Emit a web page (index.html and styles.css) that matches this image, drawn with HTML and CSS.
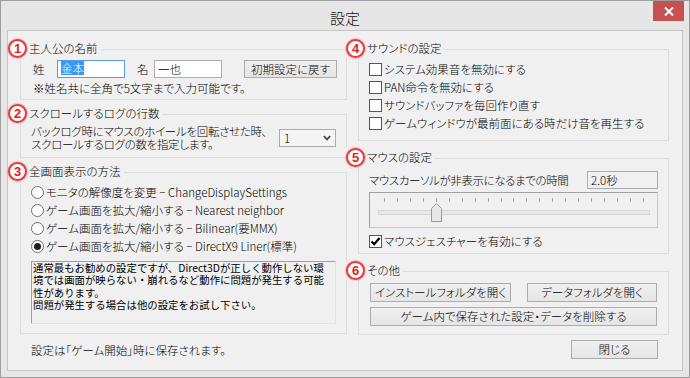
FILE: index.html
```html
<!DOCTYPE html>
<html lang="ja">
  <head>
    <meta charset="UTF-8" />
    <title>設定</title>
    <link rel="stylesheet" href="styles.css">
  </head>
  <body>
    <div class="window">
      <div class="titlebar">
        <span class="title">設定</span>
        <button class="close" aria-label="閉じる">
          <svg width="10" height="9" viewBox="0 0 10 9">
            <path d="M1 0.5L9 8.5M9 0.5L1 8.5" stroke="#fff" stroke-width="2" fill="none" />
          </svg>
        </button>
      </div>

      <div class="client">
        <div class="columns">
          <div class="col col-left">
            <section class="group g-name">
              <h3 class="group-title"><span class="num">1</span>主人公の名前</h3>
              <div class="name-row">
                <span class="name-label">姓</span>
                <div class="field focused"><span class="selected">金本</span></div>
                <span class="name-label mei">名</span>
                <div class="field">一也</div>
                <button class="btn btn-reset">初期設定に戻す</button>
              </div>
              <p class="note">※姓名共に全角で5文字まで入力可能です。</p>
            </section>

            <section class="group g-scroll">
              <h3 class="group-title"><span class="num">2</span>スクロールするログの行数</h3>
              <div class="scroll-row">
                <p class="scroll-text">バックログ時にマウスのホイールを回転させた時、<br>スクロールするログの数を指定します。</p>
                <div class="select">
                  <span>1</span>
                  <svg width="8" height="6" viewBox="0 0 8 6">
                    <path d="M0.8 1L4 4.4L7.2 1" stroke="#444" stroke-width="1.8" fill="none" />
                  </svg>
                </div>
              </div>
            </section>

            <section class="group g-screen">
              <h3 class="group-title"><span class="num">3</span>全画面表示の方法</h3>
              <div class="radio-row"><span class="radio"></span>モニタの解像度を変更 − ChangeDisplaySettings</div>
              <div class="radio-row"><span class="radio"></span>ゲーム画面を拡大/縮小する − Nearest neighbor</div>
              <div class="radio-row"><span class="radio"></span>ゲーム画面を拡大/縮小する − Bilinear(要MMX)</div>
              <div class="radio-row"><span class="radio on"></span>ゲーム画面を拡大/縮小する − DirectX9 Liner(標準)</div>
              <div class="memo">
                通常最もお勧めの設定ですが、Direct3Dが正しく動作しない環<br>
                境では画面が映らない・崩れるなど動作に問題が発生する可能<br>
                性があります。<br>
                問題が発生する場合は他の設定をお試し下さい。
              </div>
            </section>
          </div>

          <div class="col col-right">
            <section class="group g-sound">
              <h3 class="group-title"><span class="num">4</span>サウンドの設定</h3>
              <div class="check-row"><span class="check"></span>システム効果音を無効にする</div>
              <div class="check-row"><span class="check"></span>PAN命令を無効にする</div>
              <div class="check-row"><span class="check"></span>サウンドバッファを毎回作り直す</div>
              <div class="check-row"><span class="check"></span>ゲームウィンドウが最前面にある時だけ音を再生する</div>
            </section>

            <section class="group g-mouse">
              <h3 class="group-title"><span class="num">5</span>マウスの設定</h3>
              <div class="time-row">
                <span>マウスカーソルが非表示になるまでの時間</span>
                <div class="time-box">2.0秒</div>
              </div>
              <div class="slider">
                <svg width="287" height="34" viewBox="0 0 287 34">
                  <path d="M14.5 5v4M27.5 5v4M40.5 5v4M53.5 5v4M66.5 5v4M79.5 5v4M92.5 5v4M105.5 5v4M118.5 5v4M131.5 5v4M143.5 5v4M156.5 5v4M169.5 5v4M182.5 5v4M195.5 5v4M208.5 5v4M221.5 5v4M234.5 5v4M247.5 5v4M260.5 5v4M273.5 5v4" stroke="#a8a8a8" stroke-width="1" />
                  <rect x="8.5" y="17.5" width="271" height="4" fill="#e7eaea" stroke="#d6d6d6" />
                  <path d="M61.5 15.5L66.5 10.5L71.5 15.5V28.5H61.5Z" fill="#e8e8e8" stroke="#9a9a9a" />
                </svg>
              </div>
              <div class="check-row">
                <span class="check">
                  <svg width="11" height="11" viewBox="0 0 11 11">
                    <path d="M1.5 5.5L4.2 8.2L9.5 2" stroke="#000" stroke-width="2.2" fill="none" />
                  </svg>
                </span>マウスジェスチャーを有効にする
              </div>
            </section>

            <section class="group g-other">
              <h3 class="group-title"><span class="num">6</span>その他</h3>
              <div class="btn-row">
                <button class="btn btn-install">インストールフォルダを開く</button>
                <button class="btn btn-data">データフォルダを開く</button>
              </div>
              <button class="btn btn-delete">ゲーム内で保存された設定・データを削除する</button>
            </section>
          </div>
        </div>

        <div class="footer">
          <p>設定は「ゲーム開始」時に保存されます。</p>
          <button class="btn btn-close">閉じる</button>
        </div>
      </div>
    </div>
  </body>
</html>
```

FILE: styles.css
```css
* {
  margin: 0;
  padding: 0;
  box-sizing: border-box;
}

body {
  width: 690px;
  height: 378px;
  overflow: hidden;
  font-family: "Noto Sans CJK JP", "Noto Sans", sans-serif;
  font-size: 11.5px;
  font-weight: 300;
  font-feature-settings: "palt";
  color: #000;
}

.window {
  width: 690px;
  height: 378px;
  border: 1px solid #9e9e9e;
  background: #e6e6e6;
  display: flex;
  flex-direction: column;
}

.titlebar {
  height: 29px;
  flex: none;
  display: grid;
  grid-template-columns: 1fr auto 1fr;
  align-items: start;
}

.title {
  grid-column: 2;
  font-size: 15px;
  line-height: 27px;
  margin-top: 3px;
  color: #111;
}

.close {
  grid-column: 3;
  justify-self: end;
  width: 31px;
  height: 20px;
  margin-right: 5px;
  border: none;
  background: #c75050;
  display: flex;
  align-items: center;
  justify-content: center;
}

.client {
  flex: 1;
  margin: 0 6px 6px;
  border: 1px solid #c6c6c6;
  background: #f0f0f0;
  padding: 18px 0 0 12px;
}

.columns {
  display: flex;
  gap: 11px;
}

.col {
  display: flex;
  flex-direction: column;
}

.col-left {
  width: 327px;
  gap: 14px;
}

.col-right {
  width: 311px;
  gap: 17px;
}

/* group box */

.group {
  position: relative;
  border: 1px solid #dcdcdc;
}

.group-title {
  position: absolute;
  left: -13px;
  top: -11px;
  display: flex;
  align-items: center;
  gap: 2px;
  padding-right: 3px;
  background: #f0f0f0;
  font-size: 11.5px;
  font-weight: 300;
  line-height: 19px;
}

.num {
  width: 19px;
  height: 19px;
  border-radius: 50%;
  border: 2px solid #e8393b;
  background: #fff;
  box-shadow: 0 0 1px 1px rgba(240, 130, 130, 0.45);
  color: #e21c1c;
  font: bold 13px/15px "Liberation Sans", sans-serif;
  text-align: center;
}

.btn {
  font: inherit;
  font-feature-settings: "palt";
  height: 19px;
  line-height: 17px;
  padding: 0;
  border: 1px solid #acacac;
  background: linear-gradient(#f0f0f0, #e5e5e5);
  color: #000;
  text-align: center;
}

/* 1 */

.g-name {
  height: 51px;
  padding: 10px 0 0 12px;
}

.name-row {
  display: flex;
  align-items: center;
  height: 18px;
}

.name-label {
  width: 24px;
}

.name-label.mei {
  width: 17px;
  margin-left: 12px;
}

.field {
  width: 68px;
  height: 18px;
  border: 1px solid #abadb3;
  background: #fff;
  padding: 0 3px;
  line-height: 16px;
}

.field.focused {
  border-color: #569de5;
}

.selected {
  display: inline-block;
  background: #3399ff;
  color: #fff;
  line-height: 14px;
  vertical-align: 1px;
}

.btn-reset {
  width: 93px;
  height: 18px;
  line-height: 16px;
  margin-left: 22px;
}

.note {
  margin-top: 3px;
  line-height: 14px;
}

/* 2 */

.g-scroll {
  height: 44px;
}

.scroll-row {
  display: flex;
  align-items: center;
  justify-content: space-between;
  padding: 10px 10px 0;
}

.scroll-text {
  line-height: 13px;
  letter-spacing: -0.3px;
}

.select {
  width: 57px;
  height: 18px;
  border: 1px solid #acacac;
  background: #f5f5f5;
  display: flex;
  align-items: center;
  justify-content: space-between;
  padding: 0 4px 0 4px;
  line-height: 16px;
}

/* 3 */

.g-screen {
  height: 162px;
  padding: 10px 10px 0;
}

.radio-row,
.check-row {
  display: flex;
  align-items: center;
  gap: 2px;
  height: 18px;
  white-space: nowrap;
}

.radio {
  position: relative;
  flex: none;
  width: 13px;
  height: 13px;
  border-radius: 50%;
  border: 1px solid #707070;
  background: #fff;
}

.radio.on::after {
  content: "";
  position: absolute;
  left: 2px;
  top: 2px;
  width: 7px;
  height: 7px;
  border-radius: 50%;
  background: #1e1e1e;
}

.memo {
  margin-top: 6px;
  height: 63px;
  border: 1px solid;
  border-color: #a0a0a0 #e3e3e3 #e3e3e3 #a0a0a0;
  padding-left: 1px;
  font-size: 10.4px;
  font-weight: normal;
  line-height: 12.4px;
  font-feature-settings: normal;
  white-space: nowrap;
}

/* 4 */

.g-sound {
  height: 92px;
  padding: 10px 10px 0;
}

.check {
  flex: none;
  width: 13px;
  height: 13px;
  border: 1px solid #555;
  background: #fff;
  display: flex;
  align-items: center;
  justify-content: center;
}

/* 5 */

.g-mouse {
  height: 96px;
  padding: 12px 10px 0;
}

.time-row {
  display: flex;
  align-items: center;
  justify-content: space-between;
  height: 18px;
}

.time-row span {
  letter-spacing: -0.4px;
}

.time-box {
  width: 71px;
  height: 18px;
  border: 1px solid #abadb3;
  padding-left: 3px;
  line-height: 16px;
}

.slider {
  margin-top: 3px;
  height: 36px;
  border: 1px solid;
  border-color: #a0a0a0 #c9c9c9 #c9c9c9 #a0a0a0;
}

.slider svg {
  display: block;
}

.g-mouse .check-row {
  margin-top: 4px;
}

/* 6 */

.g-other {
  height: 64px;
  padding: 11px 0 0 11px;
}

.btn-row {
  display: flex;
  gap: 16px;
}

.btn-install {
  width: 141px;
}

.btn-data {
  width: 130px;
}

.btn-delete {
  display: block;
  width: 287px;
  margin-top: 5px;
}

.footer {
  width: 649px;
  margin-top: 5px;
  padding: 0 11px;
  display: flex;
  align-items: center;
  justify-content: space-between;
}

.btn-close {
  width: 87px;
}
```
